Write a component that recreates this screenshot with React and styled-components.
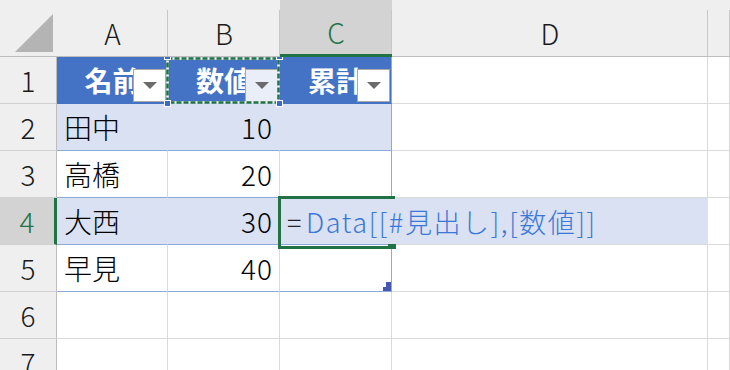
import React from 'react';
import styled, { createGlobalStyle } from 'styled-components';

const GREEN = '#217346';
const TABLE_LINE = '#8ea9db';

const Global = createGlobalStyle`
  html, body { margin: 0; padding: 0; background: #fff; }
  body { font-family: "Noto Sans CJK JP", "Noto Sans", sans-serif; }
`;

const Sheet = styled.div`
  display: grid;
  grid-template-columns: 57px 111px 112px 112px 316px 1fr;
  grid-auto-rows: 47px;
  grid-template-rows: 57px;
  width: 730px;
  height: 370px;
  overflow: hidden;
  background: #fff;
`;

const Corner = styled.div`
  position: relative;
  z-index: 5;
  box-sizing: border-box;
  display: flex;
  align-items: flex-end;
  justify-content: flex-end;
  padding: 0 4px 4px 0;
  background: #efefef;
  border-bottom: 1px solid #bdbdbd;
`;

const Triangle = styled.div`
  width: 38px;
  height: 38px;
  background: #b4b4b4;
  clip-path: polygon(100% 0, 100% 100%, 0 100%);
`;

const ColHead = styled.div`
  position: relative;
  z-index: 5;
  box-sizing: border-box;
  display: flex;
  align-items: center;
  justify-content: center;
  padding-top: 10px;
  font-size: 28px;
  font-weight: 300;
  color: ${p => (p.$active ? GREEN : '#1a1a1a')};
  background: ${p => (p.$active ? '#d3d3d3' : '#efefef')};
  border-bottom: ${p => (p.$active ? `3px solid ${GREEN}` : '1px solid #bdbdbd')};
  &::after {
    content: '';
    position: absolute;
    top: 10px;
    bottom: 0;
    right: 0;
    width: 1px;
    background: #c8c8c8;
  }
`;

const RowHead = styled.div`
  box-sizing: border-box;
  display: flex;
  align-items: center;
  justify-content: center;
  font-size: 28px;
  font-weight: 300;
  color: ${p => (p.$active ? GREEN : '#1a1a1a')};
  background: ${p => (p.$active ? '#d3d3d3' : '#efefef')};
  border-right: ${p => (p.$active ? `3px solid ${GREEN}` : '1px solid #bdbdbd')};
  border-bottom: 1px solid #d0d0d0;
`;

const fills = {
  head: { bg: '#4472c4', right: '#4472c4', bottom: '#4472c4' },
  band: { bg: '#d9e1f2', right: '#d9e1f2', bottom: TABLE_LINE },
  plain: { bg: '#fff', right: '#dadada', bottom: TABLE_LINE },
  empty: { bg: '#fff', right: '#dadada', bottom: '#dadada' },
};

const Cell = styled.div`
  position: relative;
  box-sizing: border-box;
  display: flex;
  align-items: center;
  justify-content: ${p => (p.$align === 'right' ? 'flex-end' : p.$align === 'center' ? 'center' : 'flex-start')};
  padding: 0 6px 0 7px;
  font-size: 28px;
  font-weight: ${p => (p.$kind === 'head' ? 700 : 300)};
  letter-spacing: ${p => (p.$align === 'right' ? '1px' : '0')};
  color: ${p => (p.$kind === 'head' ? '#fff' : '#000')};
  white-space: nowrap;
  background: ${p => fills[p.$kind].bg};
  border-right: 1px solid ${p => (p.$edge ? TABLE_LINE : fills[p.$kind].right)};
  border-bottom: 1px solid ${p => fills[p.$kind].bottom};
`;

const DropButton = styled.div`
  position: absolute;
  right: 1px;
  bottom: 1px;
  box-sizing: border-box;
  width: 33px;
  height: 33px;
  display: flex;
  align-items: center;
  justify-content: center;
  background: ${p => (p.$picked ? '#e9eef8' : '#fff')};
  border: 1px solid #a9a9a9;
  &::before {
    content: '';
    border-left: 7px solid transparent;
    border-right: 7px solid transparent;
    border-top: 7px solid #6b6b6b;
  }
`;

const Marquee = styled.svg`
  position: absolute;
  left: -2px;
  top: 0;
  width: 114px;
  height: 47px;
  z-index: 2;
  pointer-events: none;
`;

const Handle = styled.div`
  position: absolute;
  z-index: 3;
  box-sizing: border-box;
  width: 7px;
  height: 7px;
  background: #3b6cc4;
  border: 1px solid #fff;
  ${p => (p.$top ? 'top: -4px;' : 'bottom: -4px;')}
  ${p => (p.$left ? 'left: -4px;' : 'right: -4px;')}
`;

const Editor = styled.div`
  position: absolute;
  left: 0;
  top: 0;
  z-index: 3;
  box-sizing: border-box;
  width: 428px;
  height: 46px;
  display: flex;
  align-items: center;
  padding-left: 7px;
  background: #d9e1f2;
  font-size: 27px;
  font-weight: 300;
  letter-spacing: 1.6px;
  color: #3b78d6;
  white-space: nowrap;
`;

const Equals = styled.span`
  color: #222;
  margin-right: 3px;
`;

const ActiveFrame = styled.div`
  position: absolute;
  left: -2px;
  top: -2px;
  z-index: 4;
  box-sizing: border-box;
  width: 117px;
  height: 50px;
  border: 3px solid ${GREEN};
  border-right: none;
  border-bottom: none;
  &::after {
    content: '';
    position: absolute;
    left: -3px;
    bottom: -3px;
    width: 111px;
    height: 3px;
    background: ${GREEN};
  }
`;

const FillHandle = styled.div`
  position: absolute;
  left: 108px;
  top: 46px;
  z-index: 4;
  width: 8px;
  height: 5px;
  background: ${GREEN};
`;

const ResizeMark = styled.svg`
  position: absolute;
  right: 0;
  bottom: 0;
  width: 8px;
  height: 9px;
`;

const rows = [
  { kind: 'head', cells: ['名前', '数値', '累計'] },
  { kind: 'band', cells: ['田中', '10', ''] },
  { kind: 'plain', cells: ['高橋', '20', ''] },
  { kind: 'band', cells: ['大西', '30', ''], editing: true },
  { kind: 'plain', cells: ['早見', '40', ''], last: true },
  { kind: 'empty' },
  { kind: 'empty' },
];

function HeaderCell({ text, col }) {
  return (
    <Cell $kind="head" $align="center" $edge={col === 2}>
      {text}
      <DropButton $picked={col === 1} />
      {col === 1 && (
        <>
          <Marquee viewBox="0 0 114 47">
            <rect x="1.5" y="1.5" width="111" height="44" fill="none" stroke="#fff" strokeWidth="2.5" />
            <rect x="1.5" y="1.5" width="111" height="44" fill="none" stroke={GREEN} strokeWidth="2.5" strokeDasharray="5 2" />
          </Marquee>
          <Handle $top $left />
          <Handle $top />
          <Handle $left />
          <Handle />
        </>
      )}
    </Cell>
  );
}

export default function App() {
  return (
    <>
      <Global />
      <Sheet>
        <Corner><Triangle /></Corner>
        {['A', 'B', 'C', 'D', 'E'].map(l => (
          <ColHead key={l} $active={l === 'C'}>{l === 'E' ? '' : l}</ColHead>
        ))}

        {rows.map((row, i) => (
          <React.Fragment key={i}>
            <RowHead $active={row.editing}>{i + 1}</RowHead>
            {row.kind === 'head' &&
              row.cells.map((t, c) => <HeaderCell key={c} text={t} col={c} />)}
            {row.kind !== 'head' && row.kind !== 'empty' && (
              <>
                <Cell $kind={row.kind}>{row.cells[0]}</Cell>
                <Cell $kind={row.kind} $align="right">{row.cells[1]}</Cell>
                <Cell $kind={row.kind} $edge>
                  {row.editing && (
                    <>
                      <Editor>
                        <Equals>=</Equals>Data[[#見出し],[数値]]
                      </Editor>
                      <ActiveFrame />
                      <FillHandle />
                    </>
                  )}
                  {row.last && (
                    <ResizeMark viewBox="0 0 8 9">
                      <polygon points="3,0 8,0 8,9 0,9 0,5 3,5" fill="#4557b0" />
                    </ResizeMark>
                  )}
                </Cell>
              </>
            )}
            {row.kind === 'empty' && (
              <>
                <Cell $kind="empty" />
                <Cell $kind="empty" />
                <Cell $kind="empty" />
              </>
            )}
            <Cell $kind="empty" />
            <Cell $kind="empty" />
          </React.Fragment>
        ))}
      </Sheet>
    </>
  );
}
